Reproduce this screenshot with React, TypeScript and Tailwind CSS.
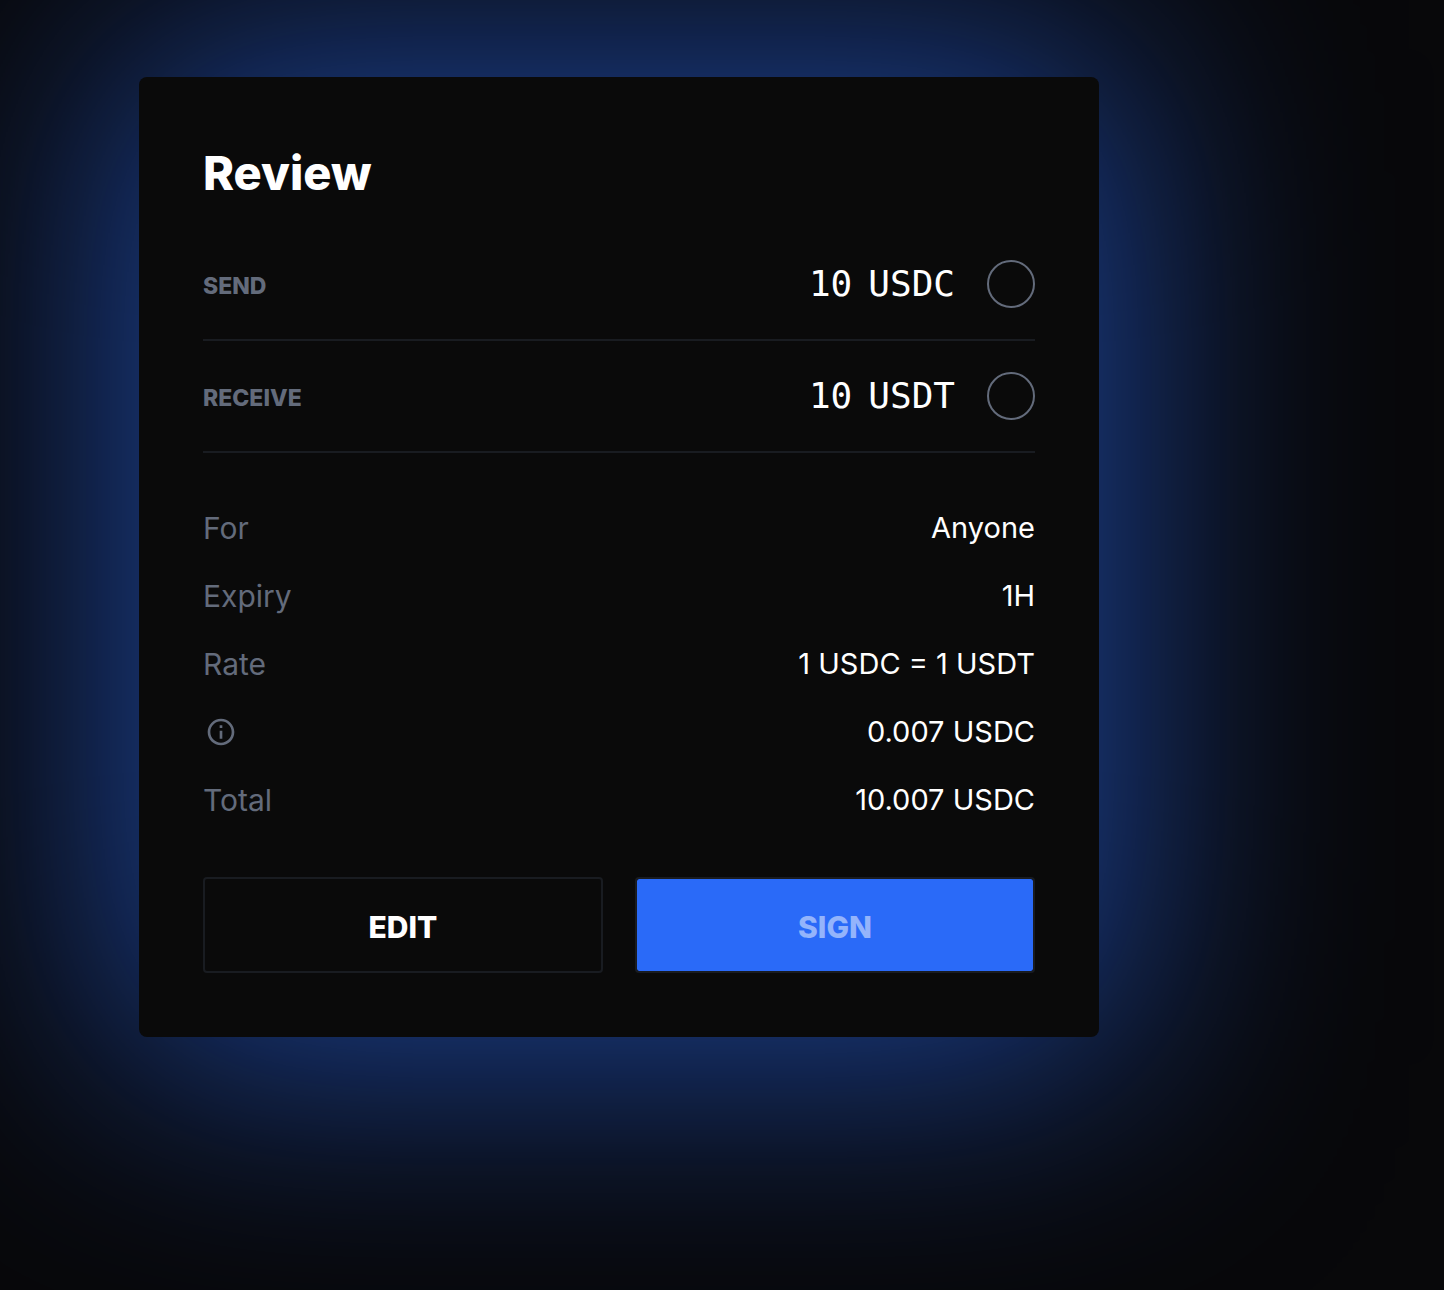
import { MdInfoOutline } from "react-icons/md";

const amounts = [
  { label: "Send", amount: "10", symbol: "USDC" },
  { label: "Receive", amount: "10", symbol: "USDT" },
];

const details = [
  { label: "For", value: "Anyone" },
  { label: "Expiry", value: "1H" },
  { label: "Rate", value: "1 USDC = 1 USDT" },
  { label: null, value: "0.007 USDC" },
  { label: "Total", value: "10.007 USDC" },
];

const App = () => {
  return (
    <main className="min-h-screen overflow-hidden bg-[#08080a] pt-[77px] pr-8 pb-16 pl-[139px] font-['Inter',sans-serif] text-white">
      <section className="w-full max-w-[960px] rounded-lg bg-[#0a0a0a] px-16 py-16 shadow-[0_0_340px_28px_rgba(43,108,248,0.6)]">
        <h1 className="mb-6 text-[47px] leading-[64px] font-extrabold">Review</h1>

        {/* Token amounts */}
        <dl>
          {amounts.map((item) => (
            <div
              key={item.label}
              className="flex items-center justify-between border-b-2 border-[#191c21] py-[31px]"
            >
              <dt className="pt-1 text-[23px] leading-8 font-extrabold text-[#636b7b] uppercase">
                {item.label}
              </dt>
              <dd className="flex items-center gap-8">
                <span className="flex gap-4 font-['DejaVu_Sans_Mono',monospace] text-[36px] leading-[48px]">
                  <span>{item.amount}</span>
                  <span>{item.symbol}</span>
                </span>
                <span className="size-12 rounded-full border-2 border-[#636b7b]"></span>
              </dd>
            </div>
          ))}
        </dl>

        {/* Order details */}
        <dl className="mt-[57px] flex flex-col gap-8">
          {details.map((item) => (
            <div key={item.value} className="flex items-center justify-between leading-9">
              <dt className="text-[30px] leading-9 text-[#636b7b]">
                {item.label ?? <MdInfoOutline className="ml-0.5 size-8" />}
              </dt>
              <dd className="text-[29px] leading-9">{item.value}</dd>
            </div>
          ))}
        </dl>

        <div className="mt-[59px] grid grid-cols-2 gap-8">
          <button
            type="button"
            className="h-24 rounded border-2 border-[#191c21] pt-1 text-[30px] font-extrabold uppercase"
          >
            Edit
          </button>
          <button
            type="button"
            disabled
            className="h-24 rounded border-2 border-[#191c21] bg-[#2a6af8] bg-clip-padding pt-1 text-[30px] font-extrabold text-white/50 uppercase"
          >
            Sign
          </button>
        </div>
      </section>
    </main>
  );
};

export default App;
